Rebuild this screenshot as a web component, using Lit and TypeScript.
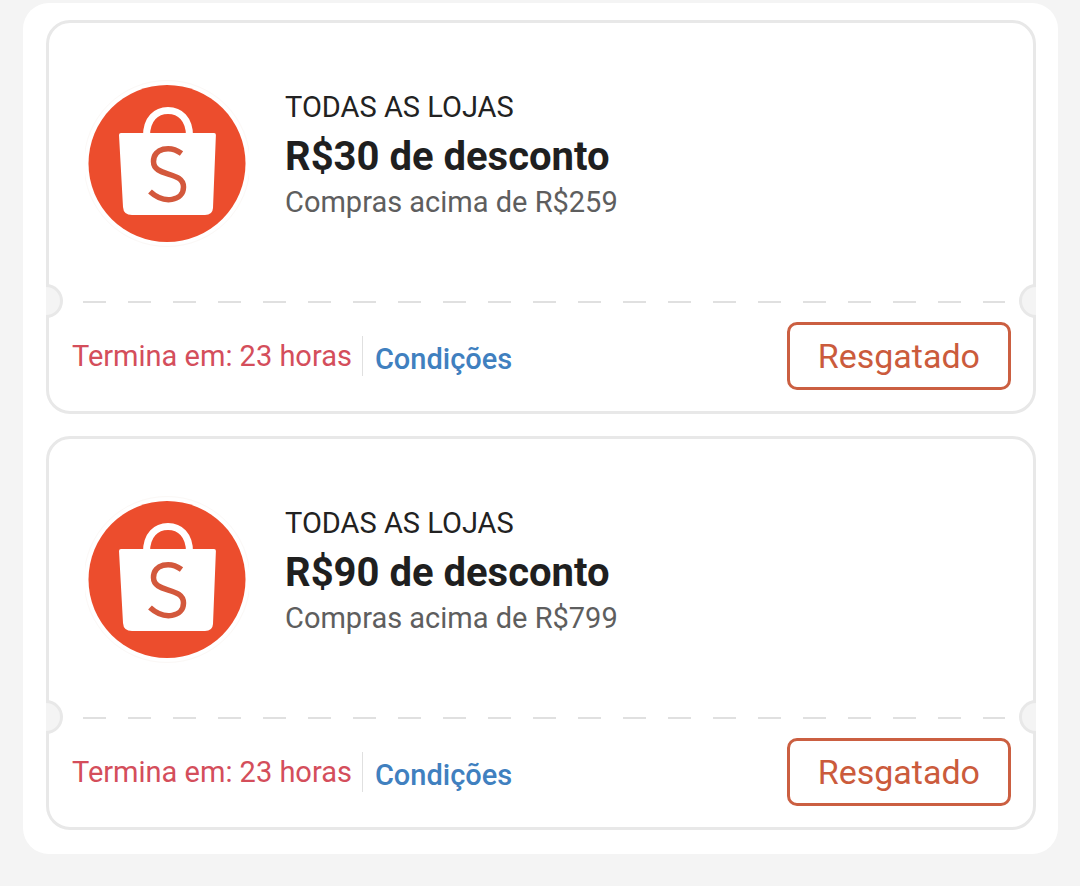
import { LitElement, html, css } from "lit";
import { customElement, property } from "lit/decorators.js";

interface Voucher {
  store: string;
  discount: string;
  minimum: string;
  expires: string;
}

const VOUCHERS: Voucher[] = [
  {
    store: "TODAS AS LOJAS",
    discount: "R$30 de desconto",
    minimum: "Compras acima de R$259",
    expires: "Termina em: 23 horas",
  },
  {
    store: "TODAS AS LOJAS",
    discount: "R$90 de desconto",
    minimum: "Compras acima de R$799",
    expires: "Termina em: 23 horas",
  },
];

@customElement("voucher-card")
export class VoucherCard extends LitElement {
  @property({ attribute: false }) voucher!: Voucher;

  static styles = css`
    :host {
      display: block;
    }
    .card {
      border: 3px solid #e8e8e8;
      border-radius: 24px;
      background: #fff;
    }
    .offer {
      display: flex;
      align-items: center;
      gap: 36px;
      padding: 56px 36px 36px;
    }
    .logo {
      flex: none;
      width: 164px;
      height: 169px;
    }
    .details {
      min-width: 0;
      padding-bottom: 24px;
    }
    .store,
    .discount,
    .minimum {
      margin: 0;
      font-weight: 400;
    }
    .store {
      font-size: 29px;
      line-height: 48px;
      color: #222;
    }
    .discount {
      font-size: 40px;
      line-height: 52px;
      font-weight: 700;
      color: #1f1f1f;
    }
    .minimum {
      font-size: 29px;
      line-height: 38px;
      color: #5e5e5e;
    }
    .tear {
      display: flex;
      align-items: center;
      margin: 0 -3px;
    }
    .notch {
      box-sizing: border-box;
      flex: none;
      width: 17px;
      height: 34px;
      border: 3px solid #e8e8e8;
      background: #f4f4f4;
    }
    .notch.left {
      border-left: 0;
      border-radius: 0 17px 17px 0;
    }
    .notch.right {
      border-right: 0;
      border-radius: 17px 0 0 17px;
    }
    .dashes {
      flex: 1;
      height: 2px;
      margin: 2px 14px 0 20px;
      background: repeating-linear-gradient(
        to right,
        #e0e0e0 0 23px,
        transparent 23px 45px
      );
    }
    .footer {
      display: flex;
      align-items: center;
      padding: 4px 22px 21px 23px;
    }
    .expires {
      font-size: 29px;
      line-height: 40px;
      color: #d44e5b;
    }
    .terms {
      margin-left: 10px;
      padding: 6px 0 0 12px;
      border-left: 1px solid #e0e0e0;
      font-size: 29px;
      line-height: 34px;
      font-weight: 500;
      color: #4080bf;
      text-decoration: none;
    }
    .claim {
      margin-left: auto;
      padding: 11px 28px;
      border: 3px solid #cb5f41;
      border-radius: 10px;
      background: #fff;
      font-family: inherit;
      font-size: 34px;
      line-height: 40px;
      color: #cb5b3c;
    }
  `;

  render() {
    const v = this.voucher;
    return html`
      <article class="card">
        <div class="offer">
          <svg class="logo" viewBox="0 0 164 169" aria-hidden="true">
            <circle cx="82" cy="84.500" r="83" fill="none" stroke="#fbf8f6" stroke-width="1" />
            <circle cx="82" cy="84.500" r="78.500" fill="#ec4d2d" />
            <path d="M61.500 57C61.500 40 71 31.500 83 31.500S104.500 40 104.500 57" fill="none" stroke="#fff" stroke-width="7" />
            <path d="M36 54H129Q131 54 130.900 56L128 129Q127.500 136 120 136H47Q38.500 136 38 128L34 56Q34 54 36 54Z" fill="#fff" />
            <path d="M96.500 74.500C85 66 68.500 69 68.500 82.500C68.500 98.500 98.500 91.500 98.500 108C98.500 122 79 125.500 65 112.500" fill="none" stroke="#d3583c" stroke-width="5.500" />
          </svg>
          <div class="details">
            <p class="store">${v.store}</p>
            <h2 class="discount">${v.discount}</h2>
            <p class="minimum">${v.minimum}</p>
          </div>
        </div>
        <div class="tear">
          <span class="notch left"></span>
          <span class="dashes"></span>
          <span class="notch right"></span>
        </div>
        <div class="footer">
          <span class="expires">${v.expires}</span>
          <a class="terms" href="#">Condições</a>
          <button class="claim" type="button">Resgatado</button>
        </div>
      </article>
    `;
  }
}

@customElement("app-root")
export class AppRoot extends LitElement {
  static styles = css`
    :host {
      display: block;
      box-sizing: border-box;
      min-height: 100vh;
      padding: 3px 22px 33px 23px;
      background: #f4f4f4;
      font-family: Roboto, "Liberation Sans", sans-serif;
    }
    .panel {
      display: flex;
      flex-direction: column;
      gap: 22px;
      padding: 17px 22px 24px 23px;
      border-radius: 26px;
      background: #fff;
    }
  `;

  render() {
    return html`
      <main class="panel">
        ${VOUCHERS.map((v) => html`<voucher-card .voucher=${v}></voucher-card>`)}
      </main>
    `;
  }
}
